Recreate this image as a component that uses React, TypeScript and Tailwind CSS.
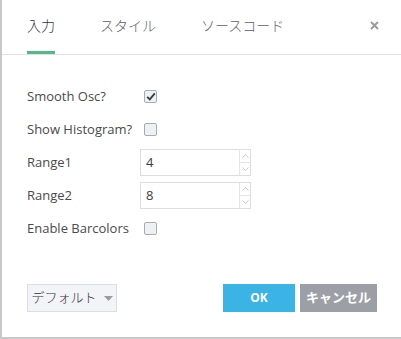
import { useState } from 'react';

// Tabs across the top of the settings dialog
const tabs = ['入力', 'スタイル', 'ソースコード'];

function Checkbox({ checked }: { checked: boolean }) {
  return (
    <span className="flex h-[13px] w-[13px] items-center justify-center rounded-[2px] border border-[#a9abb0] bg-[#eef0f3]">
      {checked && (
        <svg width="10" height="9" viewBox="0 0 10 9">
          <path d="M1.2 4.8 L3.8 7.4 L8.8 1.4" fill="none" stroke="#3b3d42" strokeWidth="1.9" />
        </svg>
      )}
    </span>
  );
}

function NumberInput({ value }: { value: string }) {
  return (
    <div className="flex h-[27px] w-[111px] border border-[#dcdde0] bg-white">
      <span className="flex flex-1 items-center pl-[5px] text-[13px] text-[#3c3c3c]">{value}</span>
      <div className="flex w-[11px] flex-col border-l border-[#e4e5e8]">
        <span className="flex flex-1 items-center justify-center border-b border-[#e4e5e8]">
          <svg width="7" height="4" viewBox="0 0 7 4"><path d="M0.5 3.5 L3.5 0.6 L6.5 3.5" fill="none" stroke="#b9bcc3" strokeWidth="0.8" /></svg>
        </span>
        <span className="flex flex-1 items-center justify-center">
          <svg width="7" height="4" viewBox="0 0 7 4"><path d="M0.5 0.5 L3.5 3.4 L6.5 0.5" fill="none" stroke="#b9bcc3" strokeWidth="0.8" /></svg>
        </span>
      </div>
    </div>
  );
}

function Row({ label, children }: { label: string; children: React.ReactNode }) {
  return (
    <div className="flex items-center">
      <span className="w-[113px] text-[13px] text-[#4a4a4a]">{label}</span>
      {children}
    </div>
  );
}

export default function App() {
  const [active] = useState(0);

  return (
    <div className="h-[339px] w-[401px] bg-[#c8c8c8] pl-[2px] pb-[2px]" style={{ fontFamily: '"Open Sans", "Noto Sans CJK JP", sans-serif' }}>
      <div className="flex h-full flex-col bg-white">
        {/* header with tabs */}
        <div className="flex h-[55px] items-end border-b border-[#e0e1e3] pl-[25px] pr-[22px]">
          {tabs.map((t, i) => (
            <div
              key={t}
              className={
                'mr-[45px] pb-[15px] text-[14px] font-light ' +
                (i === active ? 'border-b-[3px] border-[#53b987] text-[#2f3238]' : 'border-b-[3px] border-transparent text-[#5d6068]')
              }
            >
              {t}
            </div>
          ))}
          <span className="ml-auto pb-[24px]">
            <svg width="9" height="9" viewBox="0 0 9 9">
              <path d="M1 1 L8 8 M8 1 L1 8" stroke="#9a9ca2" strokeWidth="2" />
            </svg>
          </span>
        </div>

        {/* inputs */}
        <div className="flex flex-col gap-[6px] pl-[25px] pt-[28px]">
          <div className="flex h-[27px] items-center">
            <span className="w-[117px] text-[13px] text-[#4a4a4a]">Smooth Osc?</span>
            <Checkbox checked />
          </div>
          <div className="flex h-[27px] items-center">
            <span className="w-[117px] text-[13px] text-[#4a4a4a]">Show Histogram?</span>
            <Checkbox checked={false} />
          </div>
          <Row label="Range1">
            <NumberInput value="4" />
          </Row>
          <Row label="Range2">
            <NumberInput value="8" />
          </Row>
          <div className="flex h-[27px] items-center">
            <span className="w-[117px] text-[13px] text-[#4a4a4a]">Enable Barcolors</span>
            <Checkbox checked={false} />
          </div>
        </div>

        {/* footer buttons */}
        <div className="mt-auto mb-[25px] flex items-center pl-[25px] pr-[24px]">
          <button className="flex h-[28px] w-[90px] items-center justify-center gap-[7px] border border-[#dcdee3] bg-[#f3f4f7] text-[13px] font-light text-[#2f3238]">
            デフォルト
            <svg width="9" height="5" viewBox="0 0 9 5"><path d="M0 0 L9 0 L4.5 5 Z" fill="#9a9ca2" /></svg>
          </button>
          <button className="ml-auto h-[28px] w-[72px] bg-[#3bb3e4] text-[12px] font-bold text-white">OK</button>
          <button className="ml-[5px] h-[28px] w-[77px] bg-[#9c9fa6] text-[13px] font-bold text-white">キャンセル</button>
        </div>
      </div>
    </div>
  );
}
